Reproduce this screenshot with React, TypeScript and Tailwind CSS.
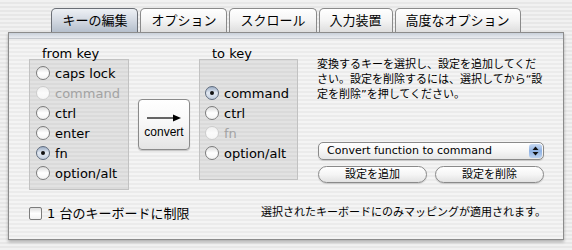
import React from "react";

const FONT = "font-['DejaVu_Sans','Noto_Sans_CJK_JP',sans-serif]";

function Radio({ label, checked = false, disabled = false }: { label: string; checked?: boolean; disabled?: boolean }) {
  const circle = disabled
    ? "border-[#cdcdcd] bg-gradient-to-b from-[#f0f0f0] via-[#fbfbfb] to-[#f6f6f6]"
    : checked
    ? "border-[#5f6b7d] bg-gradient-to-b from-[#9eafc7] via-[#e3e9f2] to-[#c5d0e0]"
    : "border-[#7c7c7c] bg-gradient-to-b from-[#dcdcdc] via-[#ffffff] to-[#f3f3f3]";
  return (
    <div className="flex h-[20px] items-center gap-[5px]">
      <span className={"flex h-[14px] w-[14px] shrink-0 items-center justify-center rounded-full border " + circle}>
        {checked && <span className="h-[4px] w-[4px] rounded-full bg-[#111111]" />}
      </span>
      <span className={"text-[13px] leading-[15px] " + (disabled ? "text-[#a3a3a3]" : "text-black")}>{label}</span>
    </div>
  );
}

export default function App() {
  const tabs = ["キーの編集", "オプション", "スクロール", "入力装置", "高度なオプション"];
  return (
    <div
      className={
        "h-[250px] w-[572px] overflow-hidden text-black bg-[repeating-linear-gradient(180deg,#f1f1f1_0px,#f1f1f1_2px,#e7e7e7_2px,#e7e7e7_4px)] " +
        FONT
      }
    >
      {/* tabs */}
      <div className="flex justify-center gap-[2px] pt-[8px]">
        {tabs.map((t, i) => (
          <div
            key={t}
            className={
              "h-[24px] whitespace-nowrap rounded-t-[5px] border border-b-0 px-[10px] text-[13px] leading-[23px] " +
              (i === 0
                ? "border-[#6b6f76] bg-gradient-to-b from-[#eef1f5] via-[#d3d9e2] to-[#b5bfcc]"
                : "border-[#8a8a8a] bg-gradient-to-b from-[#ffffff] via-[#f4f4f4] to-[#dedede]")
            }
          >
            {t}
          </div>
        ))}
      </div>

      {/* panel */}
      <div className="ml-[8px] flex h-[208px] w-[556px] flex-col border border-[#8c8c8c] bg-[repeating-linear-gradient(180deg,#f4f4f4_0px,#f4f4f4_2px,#ebebeb_2px,#ebebeb_4px)] shadow-[0_2px_3px_rgba(0,0,0,0.28)]">
        <div className="h-[6px] border-b border-[#c4c8ce] bg-gradient-to-b from-[#c9d0da] to-[#e9ecf0]" />

        <div className="flex items-start pl-[20px] pt-[7px]">
          {/* from key */}
          <div className="flex w-[100px] flex-col">
            <div className="relative z-10 h-[13px] pl-[13px] text-[13px] leading-[15px]">from key</div>
            <div className="h-[131px] border border-[#c2c2c2] bg-[#00000012] pl-[6px] pt-[3px]">
              <Radio label="caps lock" />
              <Radio label="command" disabled />
              <Radio label="ctrl" />
              <Radio label="enter" />
              <Radio label="fn" checked />
              <Radio label="option/alt" />
            </div>
          </div>

          {/* convert button */}
          <div className="ml-[9px] mt-[53px] flex h-[51px] w-[52px] flex-col items-center rounded-[4px] border border-[#8a8a8a] bg-gradient-to-b from-[#ffffff] via-[#f7f7f7] to-[#e4e4e4] pt-[14px] shadow-[0_1px_1px_rgba(0,0,0,0.2)]">
            <svg width="36" height="8" viewBox="0 0 36 8">
              <line x1="1" y1="4" x2="29" y2="4" stroke="#000" strokeWidth="1.2" />
              <polygon points="27,0.5 35,4 27,7.5" fill="#000" />
            </svg>
            <span className="mt-[3px] font-['Liberation_Sans',sans-serif] text-[12px] leading-[14px]">convert</span>
          </div>

          {/* to key */}
          <div className="ml-[9px] flex w-[99px] flex-col">
            <div className="relative z-10 h-[13px] pl-[13px] text-[13px] leading-[15px]">to key</div>
            <div className="h-[121px] border border-[#c2c2c2] bg-[#00000012] pl-[5px] pt-[23px]">
              <Radio label="command" checked />
              <Radio label="ctrl" />
              <Radio label="fn" disabled />
              <Radio label="option/alt" />
            </div>
          </div>

          {/* right column */}
          <div className="ml-[19px] flex flex-col">
            <p className="mt-[11px] whitespace-nowrap text-[11px] leading-[15px]">
              変換するキーを選択し、設定を追加してくだ
              <br />
              さい。設定を削除するには、選択してから“設
              <br />
              定を削除”を押してください。
            </p>
            <div className="ml-[1px] mt-[40px] flex h-[18px] w-[226px] items-center rounded-[5px] border border-[#8a8a8a] bg-gradient-to-b from-[#ffffff] via-[#f6f6f6] to-[#e6e6e6] shadow-[0_1px_1px_rgba(0,0,0,0.15)]">
              <span className="flex-1 pl-[8px] text-[11px] leading-[14px]">Convert function to command</span>
              <span className="mr-[1px] flex h-[14px] w-[13px] items-center justify-center rounded-[3px] bg-gradient-to-b from-[#c9daf2] via-[#8fb2e3] to-[#bcd2f0]">
                <svg width="7" height="10" viewBox="0 0 7 10">
                  <polygon points="3.5,0.5 6.5,4 0.5,4" fill="#111" />
                  <polygon points="0.5,6 6.5,6 3.5,9.5" fill="#111" />
                </svg>
              </span>
            </div>
            <div className="ml-[1px] mt-[6px] flex gap-[8px]">
              <div className="flex h-[17px] w-[109px] items-center justify-center rounded-full border border-[#8a8a8a] bg-gradient-to-b from-[#ffffff] via-[#f5f5f5] to-[#e2e2e2] text-[11px] leading-[13px] shadow-[0_1px_1px_rgba(0,0,0,0.15)]">
                設定を追加
              </div>
              <div className="flex h-[17px] w-[109px] items-center justify-center rounded-full border border-[#8a8a8a] bg-gradient-to-b from-[#ffffff] via-[#f5f5f5] to-[#e2e2e2] text-[11px] leading-[13px] shadow-[0_1px_1px_rgba(0,0,0,0.15)]">
                設定を削除
              </div>
            </div>
          </div>
        </div>

        {/* bottom row */}
        <div className="mt-[15px] flex h-[16px] items-center pl-[20px] pr-[17px]">
          <span className="h-[13px] w-[13px] rounded-[2px] border border-[#7c7c7c] bg-gradient-to-b from-[#dedede] via-[#ffffff] to-[#f2f2f2]" />
          <span className="ml-[5px] whitespace-nowrap text-[13px] leading-[15px]">1 台のキーボードに制限</span>
          <span className="ml-auto whitespace-nowrap text-[11px] leading-[14px]">選択されたキーボードにのみマッピングが適用されます。</span>
        </div>
      </div>
    </div>
  );
}
